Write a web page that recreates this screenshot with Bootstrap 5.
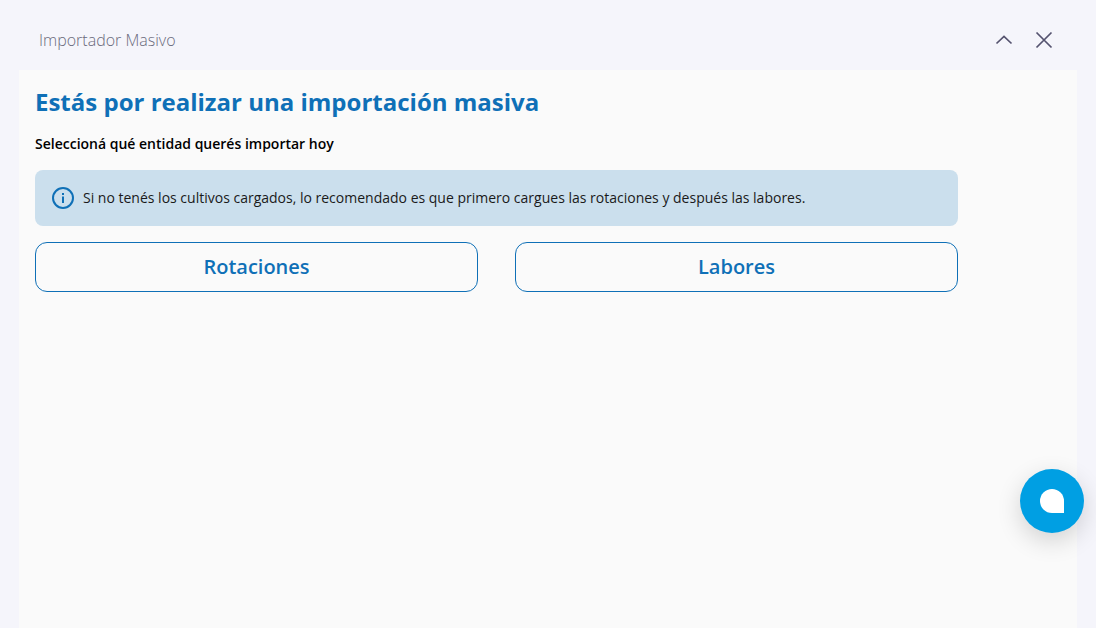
<!DOCTYPE html>
<html lang="es">
<head>
<meta charset="utf-8">
<title>Importador Masivo</title>
<link href="https://cdn.jsdelivr.net/npm/bootstrap@5.3.0/dist/css/bootstrap.min.css" rel="stylesheet">
<style>
html,body{height:100%;overflow:hidden}
body{background:#f5f5fb;font-family:"Open Sans",sans-serif;color:#000}
.shell{height:628px;padding:0 19px}
.topbar{height:70px;padding:10px 21px 0 20px}
.topttl{font-size:16px;font-weight:300;color:#6a6a7c}
.iconbtn{background:none;border:0;padding:0;width:24px;height:24px;line-height:0;color:#55536f}
.panel{background:#fafafa;height:558px;padding:15px 16px}
.inner{width:923px}
.headline{font-size:24px;font-weight:700;color:#0f70b7;line-height:33px;margin:0 0 16px}
.subline{font-size:14px;font-weight:600;line-height:19px;margin:0 0 17px;color:#000}
.notice{background:#cbdfed;border:0;border-radius:8px;height:56px;padding:0 17px;margin:0 0 16px;font-size:14px;color:#1a1a1a}
.noticetxt{padding-bottom:2px}
.choices{column-gap:37px}
.choice{flex:1 1 0;height:50px;border:1px solid #0f70b7;border-radius:12px;background:transparent;color:#0f70b7;font-size:20px;font-weight:600;padding:0}
.choice:hover{background:#eef5fa;color:#0f70b7;border-color:#0f70b7}
.chat{position:fixed;left:1020px;top:469px;width:64px;height:64px;border:0;border-radius:50%;background:#009fe3;box-shadow:0 8px 24px rgba(0,0,0,.16);padding:0}
.bubble{width:24px;height:24px;background:#fff;border-radius:50% 50% 0 50%}
</style>
</head>
<body>
<div class="shell d-flex flex-column">
  <div class="topbar d-flex align-items-center justify-content-between">
    <span class="topttl">Importador Masivo</span>
    <div class="d-flex gap-3">
      <button class="iconbtn" aria-label="Contraer"><svg width="24" height="24" viewBox="0 0 24 24" fill="none" stroke="currentColor" stroke-width="1.7"><path d="M4.5 15.5 12 8.5l7.500 7"/></svg></button>
      <button class="iconbtn" aria-label="Cerrar"><svg width="24" height="24" viewBox="0 0 24 24" fill="none" stroke="currentColor" stroke-width="1.7"><path d="M4.500 4.500l15 15M19.500 4.500l-15 15"/></svg></button>
    </div>
  </div>
  <main class="panel">
    <div class="inner">
      <h1 class="headline">Estás por realizar una importación masiva</h1>
      <p class="subline">Seleccioná qué entidad querés importar hoy</p>
      <div class="notice alert d-flex align-items-center gap-2" role="alert">
        <svg width="22" height="22" viewBox="0 0 22 22" fill="none" class="flex-shrink-0" style="margin-right:1px"><circle cx="11" cy="11" r="10" stroke="#0f70b7" stroke-width="2"/><rect x="10" y="9.500" width="2" height="6.500" fill="#0f70b7"/><rect x="10" y="6" width="2" height="2" fill="#0f70b7"/></svg>
        <span class="noticetxt">Si no tenés los cultivos cargados, lo recomendado es que primero cargues las rotaciones y después las labores.</span>
      </div>
      <div class="choices d-flex">
        <button class="choice btn">Rotaciones</button>
        <button class="choice btn">Labores</button>
      </div>
    </div>
  </main>
</div>
<button class="chat d-flex align-items-center justify-content-center" aria-label="Chat"><span class="bubble d-block"></span></button>
<script src="https://cdn.jsdelivr.net/npm/bootstrap@5.3.0/dist/js/bootstrap.bundle.min.js"></script>
</body>
</html>
